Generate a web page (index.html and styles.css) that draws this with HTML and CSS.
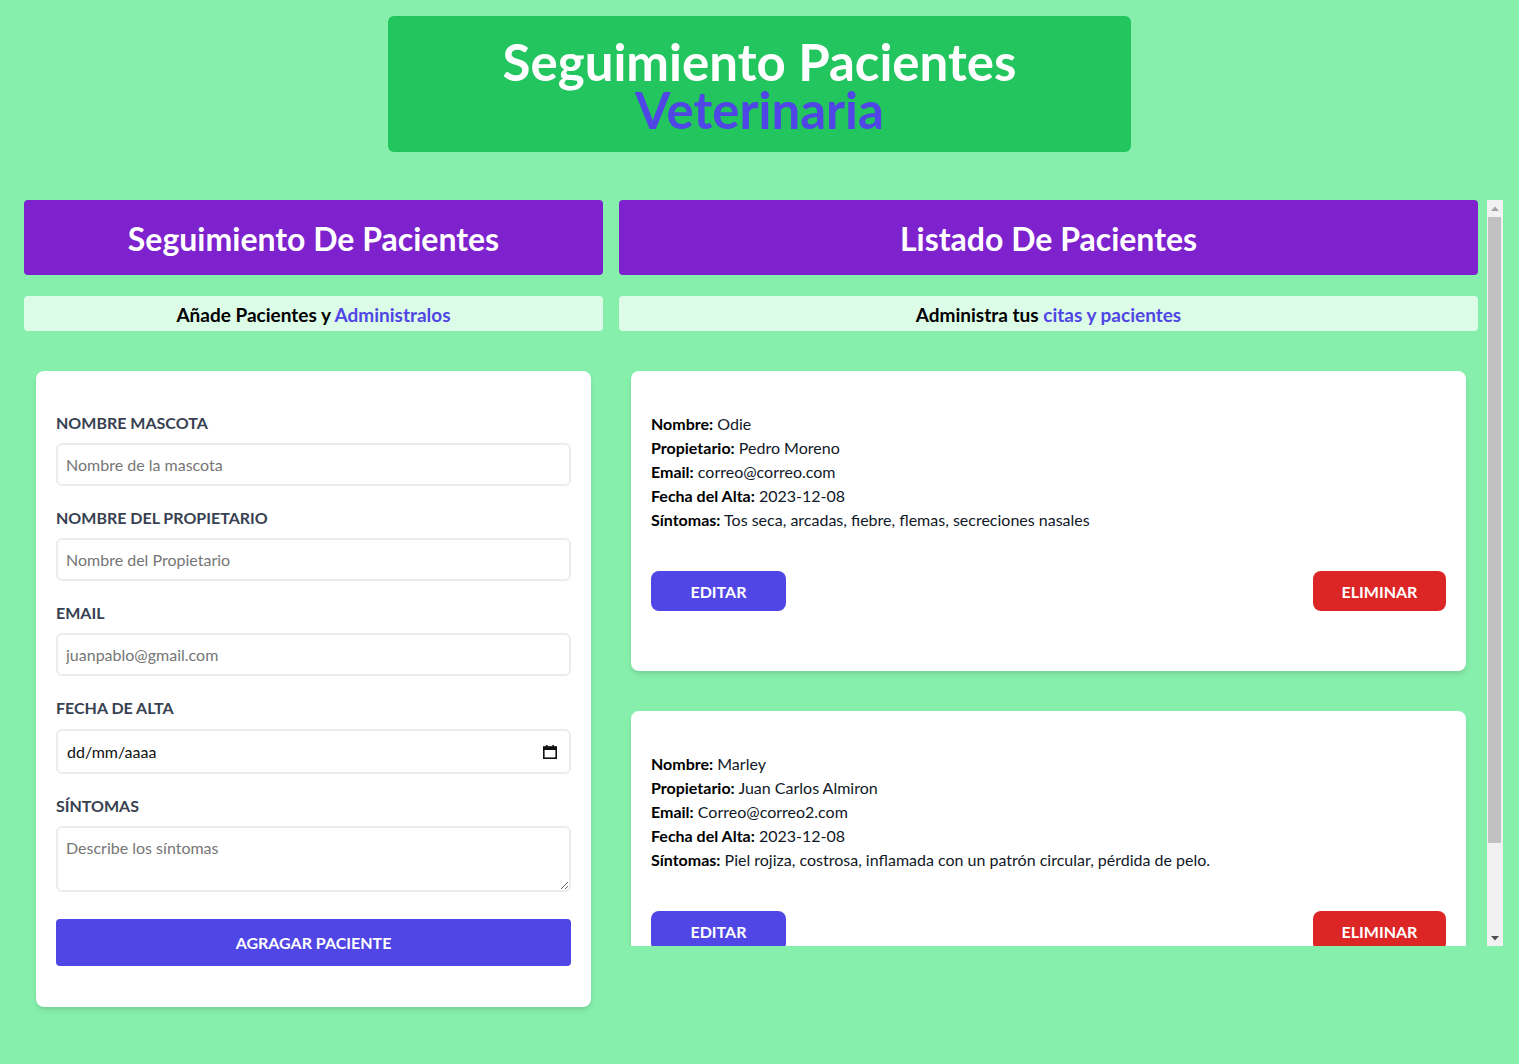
FILE: index.html
```html
<!DOCTYPE html>
<html lang="es">
<head>
<meta charset="utf-8">
<title>Seguimiento Pacientes Veterinaria</title>
<link rel="stylesheet" href="styles.css">
</head>
<body>
<header class="hero">
  <h1 class="hero-title"><span class="hero-line">Seguimiento Pacientes</span> <span class="hero-line hero-accent">Veterinaria</span></h1>
</header>

<main class="main">
  <section class="col col-form">
    <h2 class="col-title">Seguimiento De Pacientes</h2>
    <p class="col-sub">Añade Pacientes y <span class="accent">Administralos</span></p>

    <form class="card form-card">
      <div class="field">
        <label class="label" for="mascota">Nombre Mascota</label>
        <input class="input" id="mascota" type="text" placeholder="Nombre de la mascota">
      </div>
      <div class="field">
        <label class="label" for="propietario">Nombre del Propietario</label>
        <input class="input" id="propietario" type="text" placeholder="Nombre del Propietario">
      </div>
      <div class="field">
        <label class="label" for="email">Email</label>
        <input class="input" id="email" type="email" placeholder="juanpablo@gmail.com">
      </div>
      <div class="field">
        <label class="label" for="alta">Fecha de Alta</label>
        <div class="date-wrap">
          <input class="input input-date" id="alta" type="text" value="dd/mm/aaaa" readonly>
          <svg class="cal-icon" width="16" height="16" viewBox="0 0 16 16" aria-hidden="true">
            <rect x="1.8" y="3" width="12.4" height="11.2" fill="none" stroke="#111" stroke-width="1.6"/>
            <rect x="1.8" y="3" width="12.4" height="3" fill="#111"/>
            <rect x="4" y="1" width="1.6" height="3" fill="#111"/>
            <rect x="10.4" y="1" width="1.6" height="3" fill="#111"/>
          </svg>
        </div>
      </div>
      <div class="field">
        <label class="label" for="sintomas">Síntomas</label>
        <textarea class="input textarea" id="sintomas" placeholder="Describe los síntomas"></textarea>
      </div>
      <button class="btn-submit" type="button">Agragar Paciente</button>
    </form>
  </section>

  <section class="col-list">
    <div class="list">
      <h2 class="col-title">Listado De Pacientes</h2>
      <p class="col-sub">Administra tus <span class="accent">citas y pacientes</span></p>

      <article class="card patient">
        <div class="patient-info">
          <p><b>Nombre:</b> Odie</p>
          <p><b>Propietario:</b> Pedro Moreno</p>
          <p><b>Email:</b> correo@correo.com</p>
          <p><b>Fecha del Alta:</b> 2023-12-08</p>
          <p><b>Síntomas:</b> Tos seca, arcadas, fiebre, flemas, secreciones nasales</p>
        </div>
        <div class="actions">
          <button class="btn btn-edit" type="button">Editar</button>
          <button class="btn btn-delete" type="button">Eliminar</button>
        </div>
      </article>

      <article class="card patient">
        <div class="patient-info">
          <p><b>Nombre:</b> Marley</p>
          <p><b>Propietario:</b> Juan Carlos Almiron</p>
          <p><b>Email:</b> Correo@correo2.com</p>
          <p><b>Fecha del Alta:</b> 2023-12-08</p>
          <p><b>Síntomas:</b> Piel rojiza, costrosa, inflamada con un patrón circular, pérdida de pelo.</p>
        </div>
        <div class="actions">
          <button class="btn btn-edit" type="button">Editar</button>
          <button class="btn btn-delete" type="button">Eliminar</button>
        </div>
      </article>
    </div>

    <div class="scrollbar" aria-hidden="true">
      <div class="sb-btn">
        <svg width="8" height="5" viewBox="0 0 8 5"><polygon points="0,5 4,0.5 8,5" fill="#a3a3a3"/></svg>
      </div>
      <div class="sb-track"><div class="sb-thumb"></div></div>
      <div class="sb-btn">
        <svg width="8" height="5" viewBox="0 0 8 5"><polygon points="0,0 8,0 4,4.5" fill="#505050"/></svg>
      </div>
    </div>
  </section>
</main>
</body>
</html>
```

FILE: styles.css
```css
* { box-sizing: border-box; }

html, body {
  margin: 0;
  padding: 0;
}

body {
  background: #86efac;
  font-family: Lato, "Liberation Sans", sans-serif;
  font-size: 16px;
  line-height: 24px;
  color: #111827;
  min-height: 1064px;
}

.hero {
  width: 743px;
  margin: 16px auto 0;
  background: #22c55e;
  border-radius: 6px;
  padding: 22px 0 18px;
  text-align: center;
}

.hero-title {
  margin: 0;
  font-size: 51px;
  line-height: 48px;
  font-weight: 700;
  color: #ffffff;
}

.hero-line {
  display: block;
  height: 48px;
}

.hero-accent {
  color: #4f46e5;
}

.main {
  display: flex;
  gap: 16px;
  padding-left: 24px;
  margin-top: 48px;
  align-items: flex-start;
}

.col-form {
  width: 579px;
  flex: none;
}

.col-list {
  width: 884px;
  flex: none;
  height: 746px;
  display: flex;
}

.list {
  flex: 1;
  min-width: 0;
  height: 100%;
  overflow-y: auto;
  scrollbar-width: none;
  padding-right: 9px;
}

.list::-webkit-scrollbar { display: none; }

.scrollbar {
  width: 16px;
  flex: none;
  height: 100%;
  background: #f1f1f1;
  display: flex;
  flex-direction: column;
}

.sb-btn {
  height: 16px;
  flex: none;
  display: flex;
  align-items: center;
  justify-content: center;
}

.sb-track {
  flex: 1;
  padding: 1px 2px 0 1px;
}

.sb-thumb {
  height: 626px;
  background: #c1c1c1;
}

.col-title {
  margin: 0;
  height: 75px;
  background: #7e22ce;
  color: #ffffff;
  border-radius: 4px;
  font-size: 32px;
  line-height: 78px;
  font-weight: 700;
  text-align: center;
}

.col-sub {
  margin: 21px 0 0;
  height: 35px;
  background: #dcfce7;
  border-radius: 4px;
  font-size: 19px;
  line-height: 37px;
  font-weight: 700;
  text-align: center;
  color: #000;
}

.accent { color: #4f46e5; }

.card {
  background: #ffffff;
  border-radius: 8px;
  box-shadow: 0 4px 6px -1px rgba(0,0,0,0.1), 0 2px 4px -2px rgba(0,0,0,0.1);
  margin: 40px 12px 0;
}

.form-card {
  padding: 40px 20px 41px;
}

.field { margin-bottom: 20px; }

.label {
  display: block;
  font-weight: 700;
  text-transform: uppercase;
  color: #374151;
  font-size: 16px;
  line-height: 24px;
}

.input {
  display: block;
  width: 100%;
  margin-top: 8px;
  height: 43px;
  padding: 8px;
  border: 2px solid #ececec;
  border-radius: 6px;
  font-family: Lato, "Liberation Sans", sans-serif;
  font-size: 16px;
  line-height: 24px;
  color: #111;
  background: #fff;
  outline: none;
}

.input::placeholder { color: #767676; }

.date-wrap {
  position: relative;
  margin-top: 9px;
}

.input-date {
  margin-top: 0;
  height: 45px;
  padding-left: 9px;
}

.cal-icon {
  position: absolute;
  right: 13px;
  top: 15px;
}

.textarea {
  height: 66px;
  resize: vertical;
}

.btn-submit {
  display: block;
  width: 100%;
  height: 47px;
  margin-top: 27px;
  border: 0;
  border-radius: 4px;
  background: #4f46e5;
  color: #ffffff;
  font-family: Lato, "Liberation Sans", sans-serif;
  font-weight: 700;
  font-size: 16px;
  text-transform: uppercase;
}

.patient {
  padding: 41px 20px 60px;
  height: 300px;
}

.patient + .patient { margin-top: 40px; }

.patient-info p { margin: 0; }

.patient-info b { font-weight: 700; color: #000; }

.actions {
  display: flex;
  justify-content: space-between;
  margin-top: 39px;
}

.btn {
  height: 40px;
  border: 0;
  border-radius: 8px;
  color: #ffffff;
  font-family: Lato, "Liberation Sans", sans-serif;
  font-weight: 700;
  font-size: 16px;
  text-transform: uppercase;
}

.btn-edit { width: 135px; background: #4f46e5; }
.btn-delete { width: 133px; background: #dc2626; }
```
